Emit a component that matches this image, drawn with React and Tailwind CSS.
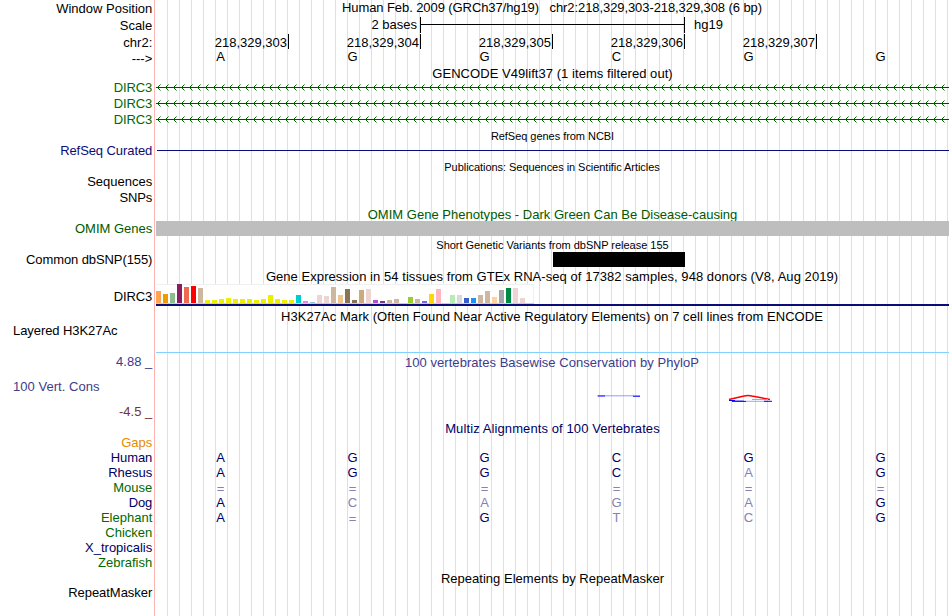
import clsx from "clsx";

const labels = [
  { text: "Window Position", height: "h-[17px]" },
  { text: "Scale", height: "h-[17px]" },
  { text: "chr2:", height: "h-4" },
  { text: "--->", height: "h-[29px]" },
  { text: "DIRC3", height: "h-4", color: "text-[#006a00]", tracking: "tracking-[-0.12px]" },
  { text: "DIRC3", height: "h-4", color: "text-[#006a00]", tracking: "tracking-[-0.12px]" },
  { text: "DIRC3", height: "h-[31px]", color: "text-[#006a00]", tracking: "tracking-[-0.12px]" },
  { text: "RefSeq Curated", height: "h-[31px]", color: "text-[#0c0c78]", tracking: "tracking-[-0.08px]" },
  { text: "Sequences", height: "h-4" },
  { text: "SNPs", height: "h-[31px]", tracking: "tracking-[-0.12px]" },
  { text: "OMIM Genes", height: "h-[31px]", color: "text-[#005a00]" },
  { text: "Common dbSNP(155)", height: "h-[37px]", tracking: "tracking-[-0.1px]" },
  { text: "DIRC3", height: "h-[34px]", tracking: "tracking-[-0.12px]" },
  { text: "Layered H3K27Ac", height: "h-[31px]", left: true, tracking: "tracking-[-0.07px]" },
  { text: "4.88 _", height: "h-[25px]", color: "text-[#3c3c8c]" },
  { text: "100 Vert. Cons", height: "h-[25px]", color: "text-[#3c3c8c]", left: true, tracking: "tracking-[0.04px]" },
  { text: "-4.5 _", height: "h-[31px]", color: "text-[#783232]" },
  { text: "Gaps", height: "h-[15px]", color: "text-[#e68a00]" },
  { text: "Human", height: "h-[15px]", color: "text-[#000064]", tracking: "tracking-[-0.1px]" },
  { text: "Rhesus", height: "h-[15px]", color: "text-[#000064]" },
  { text: "Mouse", height: "h-[15px]", color: "text-[#006a00]" },
  { text: "Dog", height: "h-[15px]", color: "text-[#000064]", tracking: "tracking-[-0.1px]" },
  { text: "Elephant", height: "h-[15px]", color: "text-[#006a00]" },
  { text: "Chicken", height: "h-[15px]", color: "text-[#006a00]" },
  { text: "X_tropicalis", height: "h-[15px]", color: "text-[#000064]" },
  { text: "Zebrafish", height: "h-[30px]", color: "text-[#006a00]" },
  { text: "RepeatMasker", height: "h-[15px]", tracking: "tracking-[-0.04px]" },
];

const positions = ["218,329,304", "218,329,305", "218,329,306", "218,329,307"];

// lower case marks a base that differs from the human one
const alignments = ["AGGCGG", "AGGCaG", "======", "AcagaG", "A=GtcG"];

// [height, color] per GTEx tissue
const tissues = [
  [12, "#ffa54f"], [9, "#ee9a00"], [10, "#8fbc8f"], [19, "#8b1c62"],
  [16, "#ee6a50"], [17, "#ff0000"], [15, "#cdb79e"], [3, "#eeee00"],
  [3, "#eeee00"], [4, "#eeee00"], [5, "#eeee00"], [4, "#eeee00"],
  [4, "#eeee00"], [4, "#eeee00"], [3, "#eeee00"], [4, "#eeee00"],
  [8, "#eeee00"], [4, "#eeee00"], [3, "#eeee00"], [3, "#eeee00"],
  [8, "#00cdcd"], [2, "#ee82ee"], [1, "#9ac0cd"], [8, "#eed5d2"],
  [7, "#eed5d2"], [16, "#cdb79e"], [8, "#eec591"], [14, "#8b7355"],
  [3, "#8b7355"], [13, "#cdaa7d"], [14, "#eed5d2"], [3, "#b452cd"],
  [2, "#7a378b"], [3, "#cdb79e"], [4, "#cdb79e"], [0, "#cdb79e"],
  [6, "#9acd32"], [4, "#cdb79e"], [2, "#7a67ee"], [9, "#ffd700"],
  [14, "#ffb6c1"], [0, "#cd9b1d"], [8, "#b4eeb4"], [8, "#d9d9d9"],
  [5, "#3a5fcd"], [5, "#1e90ff"], [8, "#cdb79e"], [12, "#cdb79e"],
  [6, "#ffd39b"], [13, "#a6a6a6"], [15, "#008b45"], [15, "#eed5d2"],
  [5, "#eed5d2"], [0, "#ff00ff"],
];

const Title = ({ className, children }) => (
  <div className={clsx("text-center", className)}>{children}</div>
);

const Bases = ({ seq, className }) => (
  <div className={clsx("flex -ml-[1.5px]", className)}>
    {seq.split("").map((base, i) => (
      <span
        key={i}
        className={clsx(
          "w-[132px] shrink-0 text-center",
          base !== base.toUpperCase() && "text-[#8282b4]",
          base === "=" && "pt-px text-[#8282b4]"
        )}
      >
        {base.toUpperCase()}
      </span>
    ))}
  </div>
);

const GeneLine = () => (
  <svg width="793" height="16" className="block" fill="none" stroke="#006400">
    <path d="M0 7.5H793" stroke="#005000" />
    {Array.from({ length: 99 }, (_, i) => (
      <path key={i} d={`M${i * 8 + 4.5} 4.5L${i * 8 + 1.5} 7.5L${i * 8 + 4.5} 10.5`} />
    ))}
  </svg>
);

const App = () => {
  return (
    <div className="flex w-[950px] h-[616px] overflow-hidden bg-white text-black font-['Liberation_Sans',sans-serif] text-[13px] leading-[15px] whitespace-pre">

      <div className="w-[154px] shrink-0 pt-px pr-[1.75px]">
        {labels.map((label, i) => (
          <div
            key={i}
            className={clsx(label.height, label.color, label.tracking, label.left ? "pl-[13px] text-left" : "text-right")}
          >
            {label.text}
          </div>
        ))}
      </div>

      <div className="w-px shrink-0 mr-px bg-[#ffb4b4]" />

      <div className="w-[793px] shrink-0 bg-[repeating-linear-gradient(90deg,transparent_0_11px,#dcdcff_11px_12px)]">

        <Title className="h-[17px] pr-px tracking-[-0.085px]">
          Human Feb. 2009 (GRCh37/hg19)   chr2:218,329,303-218,329,308 (6 bp)
        </Title>

        <div className="flex h-4 mb-px">
          <span className="w-[264px] pr-[3px] text-right">2 bases</span>
          <div className="w-[265px] border-x border-black">
            <div className="mt-[7px] h-px bg-black" />
          </div>
          <span className="pl-[9px]">hg19</span>
        </div>

        <div className="flex h-[15px] text-right">
          <span className="w-[133px] pt-px pr-px border-r border-black">218,329,303</span>
          {positions.map((pos) => (
            <span key={pos} className="w-[132px] pt-px pr-px border-r border-black">{pos}</span>
          ))}
        </div>

        <Bases seq="AGGCGG" className="h-[17px]" />

        <Title className="h-[14px] tracking-[0.05px]">GENCODE V49lift37 (1 items filtered out)</Title>
        <GeneLine />
        <GeneLine />
        <GeneLine />

        <Title className="h-[22px] pt-px text-[11px] leading-[15px] tracking-[-0.04px]">RefSeq genes from NCBI</Title>
        <div className="ml-px h-px bg-[#0c0c78]" />

        <Title className="h-[56px] pt-[9px] pr-px text-[11px] leading-[15px] tracking-[-0.05px]">
          Publications: Sequences in Scientific Articles
        </Title>

        <Title className="h-[14px] overflow-hidden text-[#005a00] tracking-[0.02px]">
          OMIM Gene Phenotypes - Dark Green Can Be Disease-causing
        </Title>
        <div className="h-[15px] bg-[#bebebe]" />

        <Title className="h-4 pt-[2px] text-[11px] leading-[15px] tracking-[-0.02px]">Short Genetic Variants from dbSNP release 155</Title>
        <div className="ml-[397px] w-[132px] h-[15px] bg-black" />

        <Title className="h-[17px] pt-[2px] pr-px tracking-[0.055px]">
          Gene Expression in 54 tissues from GTEx RNA-seq of 17382 samples, 948 donors (V8, Aug 2019)
        </Title>
        <div className="flex items-end gap-[2px] w-[378px] h-5 bg-white border-b border-[#cdcdcd] shadow-[inset_-1px_1px_0_#f0f0f0]">
          {tissues.map(([height, color], i) => (
            <div key={i} className="w-[5px] shrink-0" style={{ height, backgroundColor: color }} />
          ))}
        </div>
        <div className="h-[2px] bg-[#0c0c78]" />

        <Title className="h-[46px] pt-[3px] pr-px tracking-[0.05px]">
          H3K27Ac Mark (Often Found Near Active Regulatory Elements) on 7 cell lines from ENCODE
        </Title>
        <div className="h-px bg-[#82d2ff]" />

        <Title className="h-[41px] pt-[2px] pr-px text-[#3c3c8c] tracking-[0.04px]">
          100 vertebrates Basewise Conservation by PhyloP
        </Title>
        <svg width="793" height="9" className="block" fill="none">
          <path d="M441 1.8H484" stroke="#9696ff" />
          <path d="M442 2H449M477 2.3H484" stroke="#0000ff" strokeWidth="0.9" />
          <path d="M573 5.5L588 2Q592 0.8 596 2L614 5.5" stroke="#ff0000" strokeWidth="1.5" />
          <path d="M575 6.5H588M596 5.5H612M590 7.3H612" stroke="#a0a0ff" />
          <path d="M573 6.5H579M576 7.4H590M608 7.3H616" stroke="#0000ff" strokeWidth="1" />
        </svg>

        <Title className="h-[47px] pt-[18px] text-[#000064] tracking-[0.1px]">Multiz Alignments of 100 Vertebrates</Title>
        {alignments.map((seq, i) => (
          <Bases key={i} seq={seq} className="h-[15px] text-[#000064]" />
        ))}

        <Title className="pt-[46px] tracking-[0.02px]">Repeating Elements by RepeatMasker</Title>

      </div>
    </div>
  );
};

export default App;
